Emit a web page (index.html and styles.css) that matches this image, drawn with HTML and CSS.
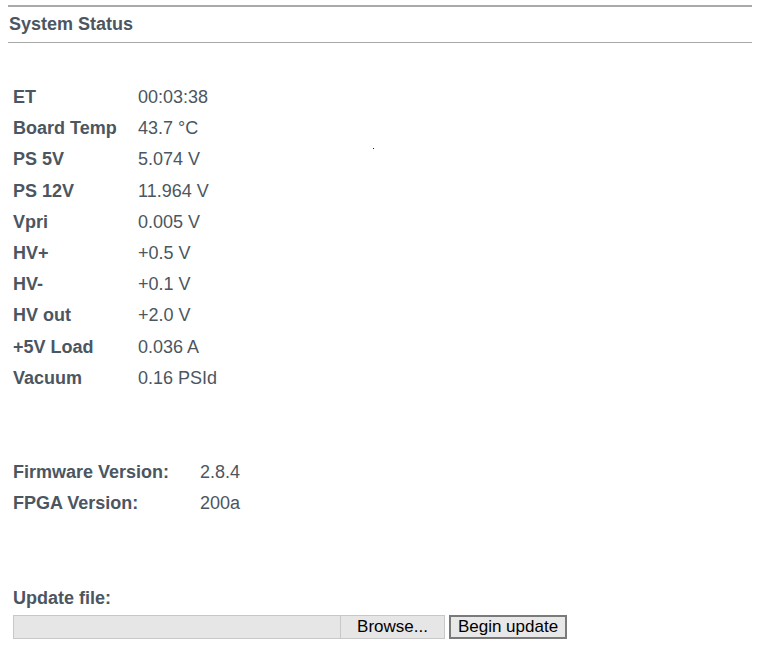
FILE: index.html
```html
<!DOCTYPE html>
<html>
<head>
<meta charset="utf-8">
<link rel="stylesheet" href="styles.css">
</head>
<body>
<div class="page">
  <h2 class="title">System Status</h2>
  <div class="dot"></div>
  <table class="status">
    <tr><th>ET</th><td>00:03:38</td></tr>
    <tr><th>Board Temp</th><td>43.7 °C</td></tr>
    <tr><th>PS 5V</th><td>5.074 V</td></tr>
    <tr><th>PS 12V</th><td>11.964 V</td></tr>
    <tr><th>Vpri</th><td>0.005 V</td></tr>
    <tr><th>HV+</th><td>+0.5 V</td></tr>
    <tr><th>HV-</th><td>+0.1 V</td></tr>
    <tr><th>HV out</th><td>+2.0 V</td></tr>
    <tr><th>+5V Load</th><td>0.036 A</td></tr>
    <tr><th>Vacuum</th><td>0.16 PSId</td></tr>
  </table>
  <table class="versions">
    <tr><th>Firmware Version:</th><td>2.8.4</td></tr>
    <tr><th>FPGA Version:</th><td>200a</td></tr>
  </table>
  <div class="update">
    <div class="update-label">Update file:</div>
    <div class="update-row">
      <div class="file-field"></div>
      <button class="btn browse">Browse...</button>
      <button class="btn begin">Begin update</button>
    </div>
  </div>
</div>
</body>
</html>
```
FILE: styles.css
```css
html, body {
  margin: 0;
  padding: 0;
  background: #fff;
}
body {
  font-family: "Liberation Sans", Arial, sans-serif;
  color: #4b5661;
}
.page {
  position: relative;
  margin: 5px 10px 0 8px;
}
.title {
  margin: 0;
  font-size: 18px;
  font-weight: bold;
  border-top: 2px solid #a9a9a9;
  border-bottom: 1px solid #a9a9a9;
  padding: 7px 0 0 1px;
  box-sizing: border-box;
  height: 38px;
  line-height: 20px;
}
.dot {
  position: absolute;
  left: 365px;
  top: 143px;
  width: 1px;
  height: 1px;
  background: #222;
}
table {
  border-collapse: collapse;
  font-size: 18px;
}
th {
  text-align: left;
  font-weight: bold;
  padding: 0;
}
td {
  padding: 0;
}
.status {
  margin: 39px 0 0 5px;
}
.status tr {
  height: 31.2px;
}
.status th {
  width: 125px;
}
.versions {
  margin: 63px 0 0 5px;
}
.versions tr {
  height: 31px;
}
.versions th {
  width: 187px;
}
.update {
  margin: 69px 0 0 5px;
}
.update-label {
  font-size: 18px;
  font-weight: bold;
  line-height: 20px;
}
.update-row {
  display: flex;
  align-items: center;
  margin-top: 7px;
}
.file-field {
  width: 327px;
  height: 24px;
  box-sizing: border-box;
  background: #e6e6e6;
  border: 1px solid #c8c8c8;
  border-right: none;
}
.btn {
  font-family: "Liberation Sans", Arial, sans-serif;
  font-size: 17px;
  color: #000;
  height: 24px;
  box-sizing: border-box;
  padding: 0 4px;
  background: #e6e6e6;
  margin: 0;
}
.browse {
  width: 105px;
  border: 1px solid #c8c8c8;
}
.begin {
  width: 118px;
  margin-left: 4px;
  border: 2px solid #7a7a7a;
  background: #e8e8e8;
}
```
